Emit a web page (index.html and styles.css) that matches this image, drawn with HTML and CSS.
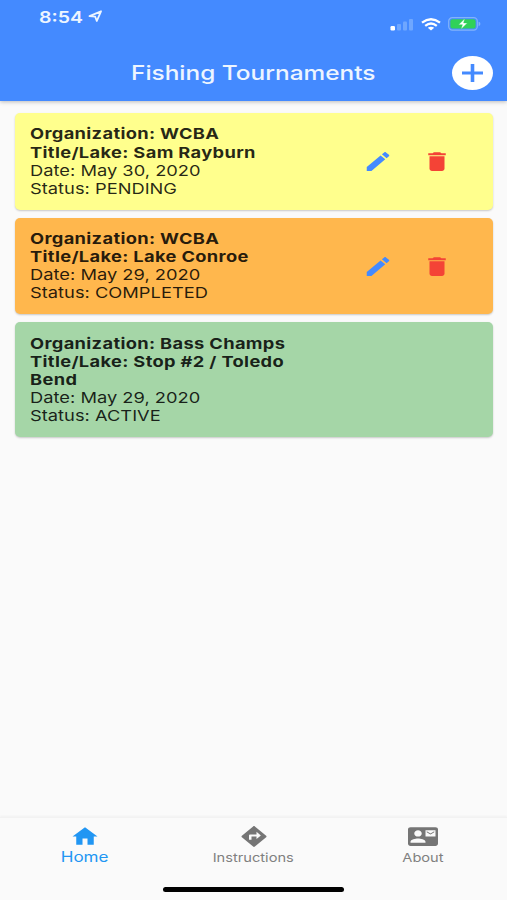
FILE: index.html
```html
<!DOCTYPE html>
<html lang="en">
<head>
  <meta charset="UTF-8" />
  <meta name="viewport" content="width=device-width, initial-scale=1.0"/>
  <title>Fishing Tournaments</title>
  <link rel="stylesheet" href="styles.css">
</head>
<body>
  <header class="header">
    <div class="status-bar">
      <div class="clock">
        <span class="wide time">8:54</span>
        <svg class="location" width="15" height="13" viewBox="0 0 15 13"><path d="M1.5 6.1L13 1.3L8.8 11L7.2 6.7Z" fill="none" stroke="#edf5ff" stroke-width="1.8" stroke-linejoin="round"/></svg>
      </div>
      <div class="indicators">
        <svg width="24" height="13" viewBox="0 0 24 13">
          <rect x="0.5" y="8" width="4.5" height="4.5" rx="1.2" fill="#fff"/>
          <g fill="#6fa7ff">
            <rect x="7" y="6" width="4" height="6.5" rx="1"/>
            <rect x="13" y="3.5" width="4" height="9" rx="1"/>
            <rect x="19" y="1" width="4" height="11.5" rx="1"/>
          </g>
        </svg>
        <svg width="20" height="13" viewBox="0 0 20 13">
          <g fill="none" stroke="#fff" stroke-width="2.3">
            <path d="M1 4.7Q10-2.2 19 4.7"/>
            <path d="M4.2 7.8Q10 3.3 15.8 7.8"/>
          </g>
          <path d="M6.8 9.8Q10 7.6 13.2 9.8L10 12.4Z" fill="#fff"/>
        </svg>
        <svg width="33" height="14" viewBox="0 0 33 14">
          <rect x="0.7" y="0.7" width="28.6" height="12.4" rx="3.6" fill="none" stroke="#82b3fb" stroke-width="1.2"/>
          <rect x="2.4" y="2.2" width="25.2" height="9.4" rx="2" fill="#30d158"/>
          <path d="M30.6 4.8Q32.6 5.4 32.4 7Q32.4 8.6 30.6 9.2Z" fill="#82b3fb"/>
          <path d="M16.8 1.6L10.6 7.7H14.4L13 12.2L19.4 6H15.6Z" fill="#fff" stroke="#30d158" stroke-width="0.4"/>
        </svg>
      </div>
    </div>
    <div class="title-bar">
      <h1 class="wide">Fishing Tournaments</h1>
      <button class="add" aria-label="Add tournament">
        <svg width="21" height="18" viewBox="0 0 21 18"><path d="M0 7.5H8.7V0H12.3V7.5H21V10.5H12.3V18H8.7V10.5H0Z" fill="#448aff"/></svg>
      </button>
    </div>
  </header>

  <main class="list">
    <div class="card pending">
      <div class="info">
        <b class="wide">Organization: WCBA</b>
        <b class="wide">Title/Lake: Sam Rayburn</b>
        <span class="wide">Date: May 30, 2020</span>
        <span class="wide">Status: PENDING</span>
      </div>
      <svg class="icon edit" viewBox="0 0 24 24" preserveAspectRatio="none"><path d="M3 17.25V21h3.75L17.81 9.94l-3.75-3.75L3 17.25zM20.71 7.04c.39-.39.39-1.02 0-1.41l-2.34-2.34c-.39-.39-1.02-.39-1.41 0l-1.83 1.83 3.75 3.75 1.83-1.83z"/></svg>
      <svg class="icon delete" viewBox="0 0 24 24" preserveAspectRatio="none"><path d="M6 19c0 1.1.9 2 2 2h8c1.1 0 2-.9 2-2V7H6v12zM19 4h-3.5l-1-1h-5l-1 1H5v2h14V4z"/></svg>
    </div>

    <div class="card completed">
      <div class="info">
        <b class="wide">Organization: WCBA</b>
        <b class="wide">Title/Lake: Lake Conroe</b>
        <span class="wide">Date: May 29, 2020</span>
        <span class="wide">Status: COMPLETED</span>
      </div>
      <svg class="icon edit" viewBox="0 0 24 24" preserveAspectRatio="none"><path d="M3 17.25V21h3.75L17.81 9.94l-3.75-3.75L3 17.25zM20.71 7.04c.39-.39.39-1.02 0-1.41l-2.34-2.34c-.39-.39-1.02-.39-1.41 0l-1.83 1.83 3.75 3.75 1.83-1.83z"/></svg>
      <svg class="icon delete" viewBox="0 0 24 24" preserveAspectRatio="none"><path d="M6 19c0 1.1.9 2 2 2h8c1.1 0 2-.9 2-2V7H6v12zM19 4h-3.5l-1-1h-5l-1 1H5v2h14V4z"/></svg>
    </div>

    <div class="card active">
      <div class="info">
        <b class="wide">Organization: Bass Champs</b>
        <b class="wide">Title/Lake: Stop #2 / Toledo<br>Bend</b>
        <span class="wide">Date: May 29, 2020</span>
        <span class="wide">Status: ACTIVE</span>
      </div>
    </div>
  </main>

  <footer class="footer">
    <nav class="tabs">
      <a class="tab selected">
        <svg class="icon" viewBox="0 0 24 24" preserveAspectRatio="none"><path d="M10 20v-6h4v6h5v-8h3L12 3 2 12h3v8z"/></svg>
        <span class="wide">Home</span>
      </a>
      <a class="tab">
        <svg class="icon" viewBox="0 0 24 24" preserveAspectRatio="none"><path d="M21.71 11.29l-9-9c-.39-.39-1.02-.39-1.41 0l-9 9c-.39.39-.39 1.02 0 1.41l9 9c.39.39 1.02.39 1.41 0l9-9c.39-.38.39-1.01 0-1.41zM14 14.5V12h-4v3H8v-4c0-.55.45-1 1-1h5V7.5l3.5 3.5-3.5 3.5z"/></svg>
        <span class="wide">Instructions</span>
      </a>
      <a class="tab">
        <svg class="icon" viewBox="0 0 24 24" preserveAspectRatio="none"><path d="M21 8V7l-3 2-3-2v1l3 2 3-2zm1-5H2C.9 3 0 3.9 0 5v14c0 1.1.9 2 2 2h20c1.1 0 1.99-.9 1.99-2L24 5c0-1.1-.9-2-2-2zM8 6c1.66 0 3 1.34 3 3s-1.34 3-3 3-3-1.34-3-3 1.34-3 3-3zm6 12H2v-1c0-2 4-3.1 6-3.1s6 1.1 6 3.1v1zm8-6h-8V6h8v6z"/></svg>
        <span class="wide">About</span>
      </a>
    </nav>
    <div class="home-bar"></div>
  </footer>
</body>
</html>
```

FILE: styles.css
```css
* {
  box-sizing: border-box;
}

body {
  background: #fafafa;
  color: rgba(0, 0, 0, 0.85);
  font-family: Inter, "Liberation Sans", sans-serif;
  display: flex;
  flex-direction: column;
  height: 900px;
  margin: 0;
  overflow: hidden;
}

svg {
  display: block;
  flex: none;
}

/* extended letterforms */
.wide {
  display: block;
  width: fit-content;
  white-space: nowrap;
  transform: scaleX(1.22);
  transform-origin: left center;
}

.header {
  background: #448aff;
  color: #fff;
  height: 101px;
  box-shadow: 0 1px 4px rgba(0, 0, 0, 0.25);
}

.status-bar {
  display: flex;
  justify-content: space-between;
  height: 45px;
  padding: 6px 26px 0 39px;
}

.clock {
  display: flex;
  height: 21px;
  align-items: center;
}

.time {
  width: 49px;
  font-size: 16px;
  font-weight: 600;
  line-height: 20px;
  color: #edf5ff;
}

.indicators {
  display: flex;
  gap: 7px;
  align-items: center;
  height: 14px;
  margin-top: 11px;
}

.title-bar {
  display: flex;
  align-items: center;
  justify-content: space-between;
  height: 56px;
  padding: 0 14px 0 131px;
}

h1 {
  margin: 0;
  font-size: 20px;
  font-weight: 500;
  line-height: 24px;
  color: #edf5ff;
}

.add {
  display: flex;
  align-items: center;
  justify-content: center;
  width: 41px;
  height: 34px;
  padding: 0;
  border: none;
  border-radius: 50%;
  background: #fff;
}

.list {
  flex: 1;
  display: flex;
  flex-direction: column;
  gap: 8px;
  padding: 12px 14px 0 15px;
}

.card {
  display: flex;
  align-items: center;
  padding: 12.4px 41px 11.6px 15px;
  border-radius: 5px;
  box-shadow: 0 1px 2px rgba(0, 0, 0, 0.2);
}

.pending {
  background: #ffff8d;
}

.completed {
  background: #ffb74d;
}

.active {
  background: #a5d6a7;
}

.info {
  flex: 1;
  font-size: 15px;
  line-height: 18.15px;
}

.info b {
  font-weight: 650;
  letter-spacing: 0.27px;
}

.icon {
  width: 30px;
  height: 25px;
  fill: #757575;
}

.edit {
  fill: #448aff;
  margin-right: 29px;
}

.delete {
  fill: #f44336;
}

.footer {
  height: 83px;
  border-top: 1px solid #f2f2f2;
  box-shadow: 0 -1px 2px rgba(0, 0, 0, 0.04);
}

.tabs {
  display: flex;
  height: 69px;
  padding-top: 6px;
}

.tab {
  flex: 1;
  display: flex;
  flex-direction: column;
  align-items: center;
  color: #808080;
  font-size: 12px;
  line-height: 18px;
}

.tab .wide {
  transform-origin: center;
}

.selected {
  color: #2196f3;
  font-size: 14px;
  line-height: 16px;
}

.selected .icon {
  fill: #2196f3;
}

.home-bar {
  width: 181px;
  height: 5px;
  margin: 0 auto;
  border-radius: 3px;
  background: #000;
}
```
